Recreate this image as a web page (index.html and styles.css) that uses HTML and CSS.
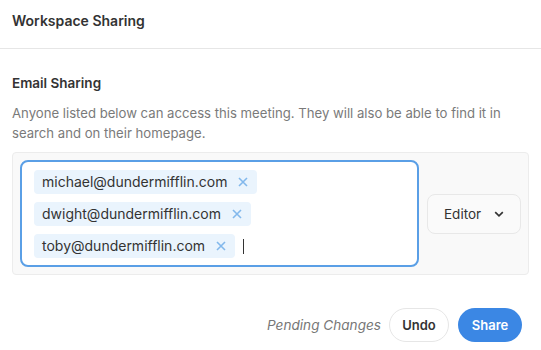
FILE: index.html
```html
<!DOCTYPE html>
<html>
<head>
<meta charset="utf-8">
<link rel="stylesheet" href="styles.css">
</head>
<body>
<div class="panel">
  <div class="header">Workspace Sharing</div>
  <div class="section">
    <div class="title">Email Sharing</div>
    <p class="desc">Anyone listed below can access this meeting. They will also be able to find it in search and on their homepage.</p>
    <div class="box">
      <div class="input">
        <span class="chip">michael@dundermifflin.com<svg class="x" viewBox="0 0 10 10"><path d="M1 1L9 9M9 1L1 9"/></svg></span>
        <span class="chip">dwight@dundermifflin.com<svg class="x" viewBox="0 0 10 10"><path d="M1 1L9 9M9 1L1 9"/></svg></span>
        <span class="chip">toby@dundermifflin.com<svg class="x" viewBox="0 0 10 10"><path d="M1 1L9 9M9 1L1 9"/></svg></span>
        <span class="cursor"></span>
      </div>
      <div class="role">Editor<svg class="chev" viewBox="0 0 10 6"><path d="M1.2 1.2L5 4.8L8.8 1.2"/></svg></div>
    </div>
  </div>
  <div class="footer">
    <span class="pending">Pending Changes</span>
    <button class="btn undo">Undo</button>
    <button class="btn share">Share</button>
  </div>
</div>
</body>
</html>
```
FILE: styles.css
```css
* { box-sizing: border-box; }
html, body { margin: 0; background: #fff; }
body {
  font-family: Inter, "Noto Sans", sans-serif;
  color: #333;
  font-size: 13px;
  line-height: 20px;
}
.header {
  height: 49px;
  padding: 11px 12px;
  font-weight: 600;
  font-size: 14px;
  border-bottom: 1px solid #e6e6e6;
}
.section {
  padding: 24px 12px 0 12px;
}
.title {
  font-weight: 600;
  font-size: 13.5px;
}
.desc {
  margin: 10px 0 9px 0;
  color: #7a7a7a;
  font-size: 13.15px;
}
.box {
  display: flex;
  align-items: center;
  gap: 8px;
  background: #f9f9f9;
  border: 1px solid #ececec;
  border-radius: 4px;
  padding: 7px 7px;
}
.input {
  flex: 1;
  display: flex;
  flex-wrap: wrap;
  align-items: center;
  gap: 8px;
  background: #fff;
  border: 2px solid #5a9fe6;
  border-radius: 8px;
  padding: 8px 12px 7px 12px;
}
.chip {
  display: inline-flex;
  align-items: center;
  height: 24px;
  padding: 0 9px 0 8px;
  background: #eaf4fd;
  border-radius: 4px;
  color: #333;
  font-size: 14px;
}
.x {
  width: 10px;
  height: 10px;
  margin-left: 11px;
  fill: none;
  stroke: #82b8ec;
  stroke-width: 1.6;
}
.cursor {
  width: 1px;
  height: 15px;
  background: #333;
}
.role {
  display: flex;
  align-items: center;
  width: 94px;
  height: 40px;
  padding: 0 16px;
  background: #fafafa;
  border: 1px solid #e8e8e8;
  border-radius: 8px;
  font-size: 13.5px;
  color: #333;
}
.chev {
  width: 10px;
  height: 6px;
  margin-left: auto;
  fill: none;
  stroke: #333;
  stroke-width: 1.7;
}
.footer {
  display: flex;
  justify-content: flex-end;
  align-items: center;
  gap: 8px;
  padding: 33px 19px 0 0;
}
.pending {
  font-style: italic;
  color: #777;
  font-size: 13.6px;
}
.btn {
  font-family: Inter, "Noto Sans", sans-serif;
  font-weight: 600;
  font-size: 13px;
  height: 34px;
  border-radius: 17px;
  padding: 0;
  cursor: pointer;
}
.undo {
  width: 60px;
  background: #fff;
  border: 1px solid #e6e6e6;
  color: #333;
}
.share {
  width: 64px;
  margin-left: 1px;
  background: #3b87e4;
  border: none;
  color: #fff;
}
```
